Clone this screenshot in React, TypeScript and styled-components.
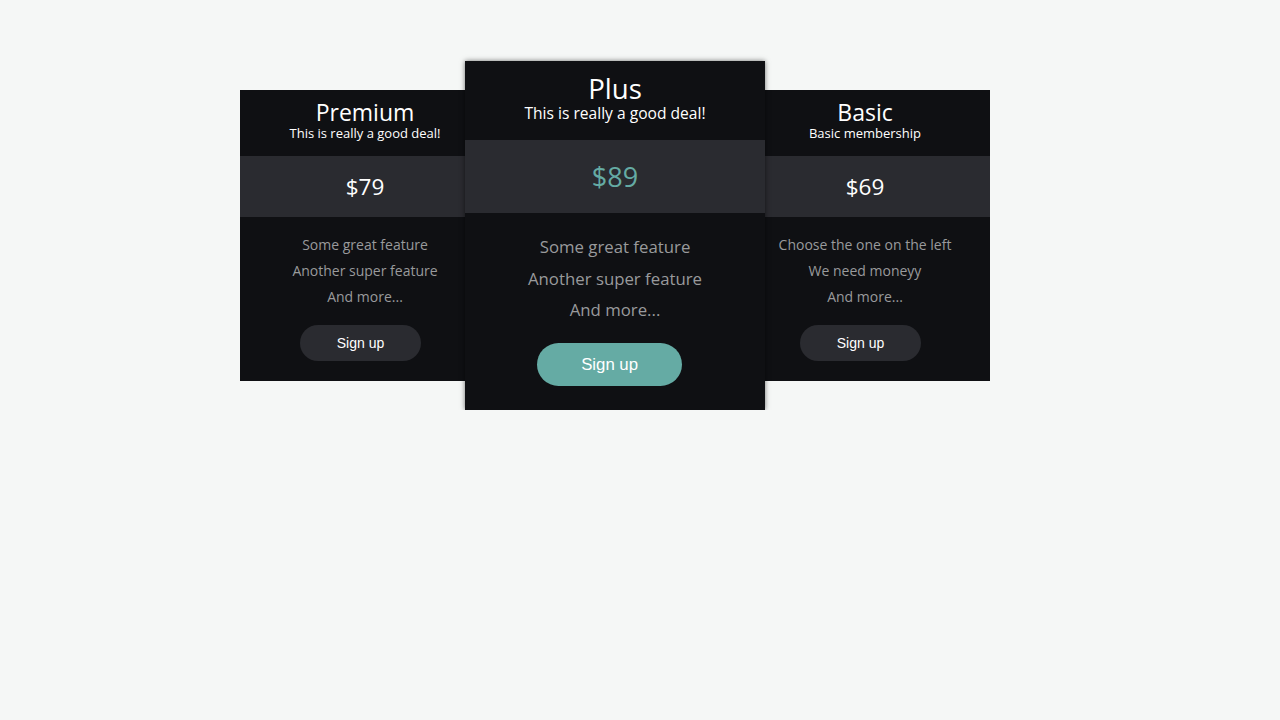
import React from 'react'
import styled, { createGlobalStyle } from 'styled-components'

const GlobalStyle = createGlobalStyle`
    html, body {
        margin: 0;
        padding: 0;
        background: #f5f7f6;
        font-family: "Open Sans", "Noto Sans", sans-serif;
    }
`

// the featured card is drawn 1.2x bigger than the others
type Scaled = { $s: number }
const px = (n: number) => (p: Scaled) => `${n * p.$s}px`

const Wrapper = styled.div`
    width: 800px;
    margin: 61px auto 0;
    display: flex;
    align-items: center;
`

const Card = styled.div<Scaled & { $featured?: boolean }>`
    width: ${px(250)};
    margin: 0 ${p => (p.$featured ? '-25px' : '0')};
    background-color: #0f1013;
    color: white;
    text-align: center;
    position: relative;
    z-index: ${p => (p.$featured ? 1 : 0)};
    box-shadow: ${p => (p.$featured ? '0 0 5px rgba(0, 0, 0, 0.55)' : 'none')};
`

const Head = styled.div<Scaled>`
    padding: ${px(10)} 0 ${px(14)};
`

const Title = styled.div<Scaled>`
    font-size: ${px(23)};
    line-height: ${px(25)};
`

const Subtitle = styled.div<Scaled>`
    font-size: ${px(13)};
    line-height: ${px(17)};
`

const Price = styled.div<Scaled & { $featured?: boolean }>`
    background-color: #2a2b30;
    height: ${px(61)};
    line-height: ${px(61)};
    font-size: ${px(22.5)};
    color: ${p => (p.$featured ? '#65aba4' : 'white')};
`

const Features = styled.div<Scaled>`
    padding: ${px(15)} 0 ${px(20)};
`

const Feature = styled.div<Scaled>`
    font-size: ${px(14)};
    line-height: ${px(26)};
    color: #999a9c;
`

const Button = styled.button<Scaled & { $featured?: boolean }>`
    display: block;
    margin: ${px(15)} 0 0 ${px(60)};
    width: ${px(121)};
    height: ${px(36)};
    padding: 0;
    border: none;
    border-radius: ${px(18)};
    background-color: ${p => (p.$featured ? '#65aba4' : '#2a2b30')};
    color: white;
    font-family: "Liberation Sans", Arial, sans-serif;
    font-size: ${px(14)};
    cursor: pointer;
`

interface Plan {
    name: string;
    subtitle: string;
    price: string;
    features: string[];
    featured?: boolean;
}

const plans: Plan[] = [
    { name: "Premium", subtitle: "This is really a good deal!", price: "$79", features: ["Some great feature", "Another super feature", "And more..."] },
    { name: "Plus", subtitle: "This is really a good deal!", price: "$89", features: ["Some great feature", "Another super feature", "And more..."], featured: true },
    { name: "Basic", subtitle: "Basic membership", price: "$69", features: ["Choose the one on the left", "We need moneyy", "And more..."] },
]

const App = () => {
    return (
        <>
            <GlobalStyle />
            <Wrapper>
                {plans.map(plan => {
                    const s = plan.featured ? 1.2 : 1
                    return (
                        <Card key={plan.name} $s={s} $featured={plan.featured}>
                            <Head $s={s}>
                                <Title $s={s}>{plan.name}</Title>
                                <Subtitle $s={s}>{plan.subtitle}</Subtitle>
                            </Head>
                            <Price $s={s} $featured={plan.featured}>{plan.price}</Price>
                            <Features $s={s}>
                                {plan.features.map(f => (
                                    <Feature key={f} $s={s}>{f}</Feature>
                                ))}
                                <Button $s={s} $featured={plan.featured}>Sign up</Button>
                            </Features>
                        </Card>
                    )
                })}
            </Wrapper>
        </>
    )
}

export default App
